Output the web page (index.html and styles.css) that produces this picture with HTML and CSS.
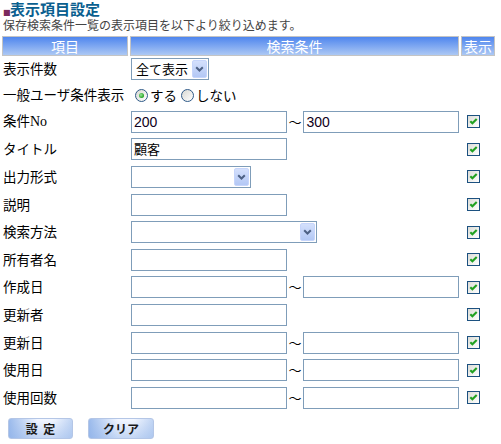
FILE: index.html
```html
<!DOCTYPE html>
<html lang="ja">
<head>
<meta charset="utf-8">
<title>表示項目設定</title>
<link rel="stylesheet" href="styles.css">
</head>
<body>
<div class="page">
  <h1 class="title"><span class="mark">■</span>表示項目設定</h1>
  <p class="lead">保存検索条件一覧の表示項目を以下より絞り込めます。</p>

  <div class="row head">
    <div class="hd">項目</div>
    <div class="hd">検索条件</div>
    <div class="hd">表示</div>
  </div>

  <div class="row r1">
    <div class="lbl">表示件数</div>
    <div class="ctl">
      <div class="sel w78"><span class="sel-text">全て表示</span><span class="sel-btn"><svg width="9" height="6" viewBox="0 0 9 6"><path d="M1.2 1.2 L4.5 4.5 L7.8 1.2" fill="none" stroke="#4d6185" stroke-width="2"/></svg></span></div>
    </div>
    <div class="chk"></div>
  </div>

  <div class="row r2">
    <div class="lbl">一般ユーザ条件表示</div>
    <div class="ctl radios">
      <span class="radio on"></span><span class="rtext">する</span>
      <span class="radio"></span><span class="rtext">しない</span>
    </div>
    <div class="chk"></div>
  </div>

  <div class="row">
    <div class="lbl">条件<span class="serif">No</span></div>
    <div class="ctl range"><div class="inp"><span class="val">200</span></div><span class="tilde">～</span><div class="inp"><span class="val">300</span></div></div>
    <div class="chk"><span class="cb"><svg width="11" height="11" viewBox="0 0 11 11"><path d="M2.3 5.2 L4.4 7.3 L8.7 3" fill="none" stroke="#21a121" stroke-width="2.1"/></svg></span></div>
  </div>

  <div class="row">
    <div class="lbl">タイトル</div>
    <div class="ctl"><div class="inp"><span class="val jp">顧客</span></div></div>
    <div class="chk"><span class="cb"><svg width="11" height="11" viewBox="0 0 11 11"><path d="M2.3 5.2 L4.4 7.3 L8.7 3" fill="none" stroke="#21a121" stroke-width="2.1"/></svg></span></div>
  </div>

  <div class="row">
    <div class="lbl">出力形式</div>
    <div class="ctl">
      <div class="sel w120"><span class="sel-text"></span><span class="sel-btn"><svg width="9" height="6" viewBox="0 0 9 6"><path d="M1.2 1.2 L4.5 4.5 L7.8 1.2" fill="none" stroke="#4d6185" stroke-width="2"/></svg></span></div>
    </div>
    <div class="chk"><span class="cb"><svg width="11" height="11" viewBox="0 0 11 11"><path d="M2.3 5.2 L4.4 7.3 L8.7 3" fill="none" stroke="#21a121" stroke-width="2.1"/></svg></span></div>
  </div>

  <div class="row">
    <div class="lbl">説明</div>
    <div class="ctl"><div class="inp"></div></div>
    <div class="chk"><span class="cb"><svg width="11" height="11" viewBox="0 0 11 11"><path d="M2.3 5.2 L4.4 7.3 L8.7 3" fill="none" stroke="#21a121" stroke-width="2.1"/></svg></span></div>
  </div>

  <div class="row">
    <div class="lbl">検索方法</div>
    <div class="ctl">
      <div class="sel w186"><span class="sel-text"></span><span class="sel-btn"><svg width="9" height="6" viewBox="0 0 9 6"><path d="M1.2 1.2 L4.5 4.5 L7.8 1.2" fill="none" stroke="#4d6185" stroke-width="2"/></svg></span></div>
    </div>
    <div class="chk"><span class="cb"><svg width="11" height="11" viewBox="0 0 11 11"><path d="M2.3 5.2 L4.4 7.3 L8.7 3" fill="none" stroke="#21a121" stroke-width="2.1"/></svg></span></div>
  </div>

  <div class="row">
    <div class="lbl">所有者名</div>
    <div class="ctl"><div class="inp"></div></div>
    <div class="chk"><span class="cb"><svg width="11" height="11" viewBox="0 0 11 11"><path d="M2.3 5.2 L4.4 7.3 L8.7 3" fill="none" stroke="#21a121" stroke-width="2.1"/></svg></span></div>
  </div>

  <div class="row">
    <div class="lbl">作成日</div>
    <div class="ctl range"><div class="inp"></div><span class="tilde">～</span><div class="inp"></div></div>
    <div class="chk"><span class="cb"><svg width="11" height="11" viewBox="0 0 11 11"><path d="M2.3 5.2 L4.4 7.3 L8.7 3" fill="none" stroke="#21a121" stroke-width="2.1"/></svg></span></div>
  </div>

  <div class="row">
    <div class="lbl">更新者</div>
    <div class="ctl"><div class="inp"></div></div>
    <div class="chk"><span class="cb"><svg width="11" height="11" viewBox="0 0 11 11"><path d="M2.3 5.2 L4.4 7.3 L8.7 3" fill="none" stroke="#21a121" stroke-width="2.1"/></svg></span></div>
  </div>

  <div class="row">
    <div class="lbl">更新日</div>
    <div class="ctl range"><div class="inp"></div><span class="tilde">～</span><div class="inp"></div></div>
    <div class="chk"><span class="cb"><svg width="11" height="11" viewBox="0 0 11 11"><path d="M2.3 5.2 L4.4 7.3 L8.7 3" fill="none" stroke="#21a121" stroke-width="2.1"/></svg></span></div>
  </div>

  <div class="row">
    <div class="lbl">使用日</div>
    <div class="ctl range"><div class="inp"></div><span class="tilde">～</span><div class="inp"></div></div>
    <div class="chk"><span class="cb"><svg width="11" height="11" viewBox="0 0 11 11"><path d="M2.3 5.2 L4.4 7.3 L8.7 3" fill="none" stroke="#21a121" stroke-width="2.1"/></svg></span></div>
  </div>

  <div class="row">
    <div class="lbl">使用回数</div>
    <div class="ctl range"><div class="inp"></div><span class="tilde">～</span><div class="inp"></div></div>
    <div class="chk"><span class="cb"><svg width="11" height="11" viewBox="0 0 11 11"><path d="M2.3 5.2 L4.4 7.3 L8.7 3" fill="none" stroke="#21a121" stroke-width="2.1"/></svg></span></div>
  </div>

  <div class="buttons">
    <span class="btn b1">設&nbsp;&nbsp;定</span>
    <span class="btn b2">クリア</span>
  </div>
</div>
</body>
</html>
```

FILE: styles.css
```css
html, body {
  margin: 0;
  padding: 0;
  background: #ffffff;
}
body {
  font-family: "Noto Sans CJK JP", "Noto Sans", sans-serif;
  color: #000;
}
.page {
  padding: 0 0 0 2px;
  width: 493px;
}
.title {
  margin: 0;
  padding: 1px 0 0 1px;
  height: 18px;
  font-family: "DejaVu Sans", "Noto Sans CJK JP", sans-serif;
  font-size: 15px;
  line-height: 18px;
  font-weight: bold;
  color: #0a5f8f;
}
.mark {
  font-size: 8px;
  color: #7b2a5e;
  display: inline-block;
  width: 7px;
  vertical-align: baseline;
}
.lead {
  margin: 0 0 3px 0;
  padding-left: 1px;
  height: 14px;
  font-family: "DejaVu Sans", "Noto Sans CJK JP", sans-serif;
  font-size: 12px;
  line-height: 14px;
  color: #444;
}
.row {
  display: grid;
  grid-template-columns: 126px 329px 34px;
  column-gap: 2px;
  align-items: center;
  height: 27.6px;
}
.row.head {
  height: 20px;
  align-items: stretch;
}
.row.r1, .row.r2 {
  height: 26px;
}
.hd {
  box-sizing: border-box;
  border: 1px solid #c4c4c4;
  background: linear-gradient(#4f86ee, #acc8f4);
  color: #fff;
  text-align: center;
  font-size: 14px;
  line-height: 18px;
}
.lbl {
  padding-left: 1px;
  padding-bottom: 2px;
  font-size: 13.5px;
  line-height: 18px;
  white-space: nowrap;
}
.serif {
  font-family: "Liberation Serif", serif;
  font-size: 14px;
}
.ctl {
  display: flex;
  align-items: center;
  padding-left: 1px;
}
.inp {
  box-sizing: border-box;
  width: 156px;
  height: 22px;
  border: 1px solid #7f9db9;
  background: #fff;
  display: flex;
  align-items: center;
  padding-left: 2px;
}
.val {
  font-family: "Liberation Sans", Arial, sans-serif;
  font-size: 14px;
  line-height: 16px;
  color: #100020;
}
.val.jp {
  font-family: "Noto Sans CJK JP", sans-serif;
  font-size: 13px;
  color: #000;
}
.tilde {
  width: 17px;
  text-align: center;
  font-size: 13px;
  line-height: 16px;
  color: #000;
}
.sel {
  box-sizing: border-box;
  height: 22px;
  border: 1px solid #7f9db9;
  background: #fff;
  display: flex;
  align-items: center;
  justify-content: space-between;
  padding: 1px;
}
.w78 { width: 78px; }
.w120 { width: 120px; }
.w186 { width: 186px; }
.sel-text {
  padding-left: 3px;
  font-size: 13px;
  line-height: 16px;
}
.sel-btn {
  box-sizing: border-box;
  width: 15px;
  height: 18px;
  border: 1px solid #c6d5fb;
  border-radius: 2px;
  background: linear-gradient(#d4e0fc, #b3c8f5);
  display: flex;
  align-items: center;
  justify-content: center;
}
.radios {
  padding-left: 5px;
}
.radio {
  box-sizing: border-box;
  width: 13px;
  height: 13px;
  border-radius: 50%;
  border: 1px solid #2f5a88;
  background: linear-gradient(135deg, #d8d8d2, #ffffff);
  display: inline-flex;
  align-items: center;
  justify-content: center;
}
.radio.on::after {
  content: "";
  width: 5px;
  height: 5px;
  border-radius: 50%;
  background: radial-gradient(circle at 40% 40%, #9be89b, #21a121 70%);
}
.rtext {
  font-size: 13.5px;
  line-height: 18px;
  margin-left: 2px;
  margin-right: 4px;
}
.chk {
  padding-left: 6px;
  display: flex;
  align-items: center;
}
.cb {
  box-sizing: border-box;
  width: 13px;
  height: 13px;
  border: 1px solid #1c5180;
  background: linear-gradient(135deg, #dcdcd7, #ffffff);
  display: flex;
}
.cb svg {
  display: block;
}
.buttons {
  display: flex;
  gap: 15px;
  padding-left: 6px;
  margin-top: 6px;
}
.btn {
  box-sizing: border-box;
  height: 21px;
  border: 1px solid #b4c6e6;
  border-radius: 3px;
  background:
    linear-gradient(to right, rgba(140, 176, 232, 0.85), rgba(255, 255, 255, 0) 45%, rgba(255, 255, 255, 0) 70%, rgba(160, 190, 236, 0.6)),
    linear-gradient(#f3f7ff, #c3d6f4);
  font-size: 12px;
  font-weight: bold;
  line-height: 19px;
  text-align: center;
  color: #1a1a1a;
}
.b1 { width: 65px; }
.b2 { width: 66px; }
```
